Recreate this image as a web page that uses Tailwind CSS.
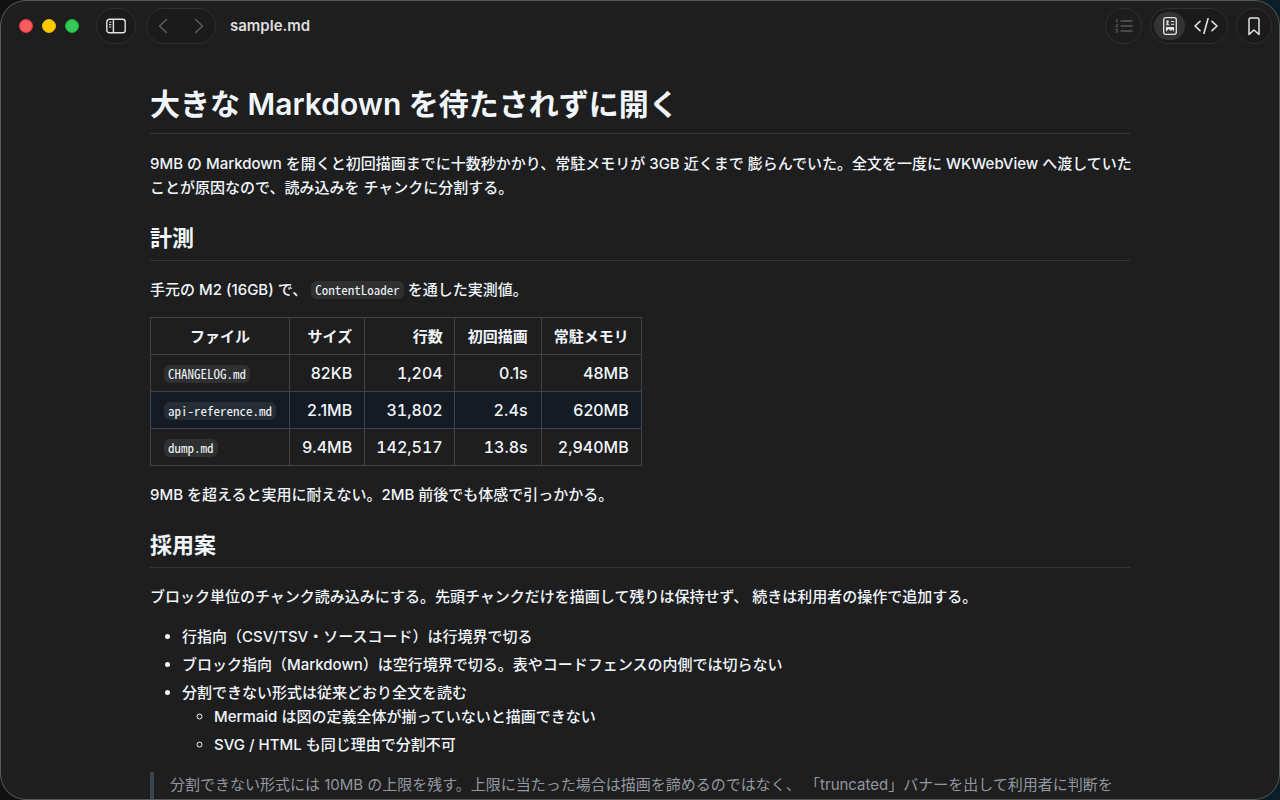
<!DOCTYPE html>
<html lang="ja">
<head>
<meta charset="utf-8">
<title>sample.md</title>
<script src="https://cdn.jsdelivr.net/npm/@tailwindcss/browser@4"></script>
</head>
<body class="h-screen overflow-hidden bg-linear-to-r from-[#111111] to-[#0d1e27] font-['Inter','Noto_Sans_CJK_JP',sans-serif] text-[15px] leading-6 font-medium text-[#f0f6fc]">
<div class="flex h-full flex-col overflow-hidden rounded-[26px] border border-[#58595a] bg-[#1e1e1e]">
  <header class="flex h-[50px] shrink-0 items-center pr-[7px] pl-[18px]">
    <div class="flex gap-[9px]">
      <button aria-label="閉じる" class="size-[14px] rounded-full border border-[#e8333d] bg-[#ff5a5f]"></button>
      <button aria-label="しまう" class="size-[14px] rounded-full border border-[#eab800] bg-[#ffc900]"></button>
      <button aria-label="拡大" class="size-[14px] rounded-full border border-[#17b43c] bg-[#34c759]"></button>
    </div>
    <button aria-label="サイドバー" class="ml-[17px] flex h-9 w-10 items-center justify-center rounded-full border border-[#303030] bg-[#1b1b1b] text-[#e4e4e4]">
      <svg class="h-4 w-5" viewBox="0 0 20 16" fill="none" stroke="currentColor" stroke-width="1.4"><rect x=".8" y="1.2" width="18.4" height="13.6" rx="2.6"/><path d="M7.4 1.2v13.6"/><path d="M3 4.2h2.4M3 6.6h2.4M3 9h2.4" stroke-width="1"/></svg>
    </button>
    <div class="ml-[10px] flex h-9 w-[70px] items-center justify-between rounded-full border border-[#303030] bg-[#1b1b1b] px-[11px] text-[#5c5c5c]">
      <button aria-label="戻る"><svg class="h-4 w-[10px]" viewBox="0 0 10 16" fill="none" stroke="currentColor" stroke-width="1.5" stroke-linecap="round" stroke-linejoin="round"><path d="M8.5 1.5 1.5 8l7 6.5"/></svg></button>
      <button aria-label="進む"><svg class="h-4 w-[10px]" viewBox="0 0 10 16" fill="none" stroke="currentColor" stroke-width="1.5" stroke-linecap="round" stroke-linejoin="round"><path d="m1.5 1.5 7 6.5-7 6.5"/></svg></button>
    </div>
    <div class="ml-[14px] text-[15px] font-semibold text-[#dedede]">sample.md</div>
    <button aria-label="目次" class="ml-auto flex h-9 w-[37px] items-center justify-center rounded-full border border-[#303030] bg-[#1d1d1d] text-[#5a5a5a]">
      <svg class="h-4 w-[18px]" viewBox="0 0 18 16" fill="none" stroke="currentColor" stroke-linecap="round" stroke-linejoin="round"><path d="M6 3h11M6 8h11M6 13h11" stroke-width="1.4"/><path d="M1 2l1-.7v3.2M.8 6.9q1.3-1.2 1.8-.2 0 .8-1.8 2.3h2M.8 11.5h1.9l-1 1.2q1.3 0 1 1.2-.5 1-1.9.3" stroke-width="1"/></svg>
    </button>
    <div class="ml-2 flex h-9 w-[78px] items-center rounded-full border border-[#303030] bg-[#1b1b1b] pl-[3px] text-[#e4e4e4]">
      <button aria-label="プレビュー" class="flex h-7 w-[31px] items-center justify-center rounded-full bg-[#333333]">
        <svg class="h-[18px] w-[14px]" viewBox="0 0 14 18" fill="none" stroke="currentColor"><rect x=".7" y=".7" width="12.6" height="16.6" rx="2" stroke-width="1.3"/><path d="M3 4.3h3M3.2 6h2.4M3 7.8h3.4M4.6 3.4v4.4M8 4.5h3.2M8 7.3h3.2" stroke-width="1"/><path d="M3 10h8v4.8l-1.7-2.3-1.5 1.5-2-2L3 14.8z" fill="currentColor" stroke="none"/></svg>
      </button>
      <button aria-label="ソース" class="ml-2 flex h-7 w-[26px] items-center justify-center">
        <svg class="h-[18px] w-6" viewBox="0 0 24 18" fill="none" stroke="currentColor" stroke-width="1.6" stroke-linecap="round" stroke-linejoin="round"><path d="M6 4.3 1 9l5 4.7M18 4.3 23 9l-5 4.7M14 1.7l-4 14.6"/></svg>
      </button>
    </div>
    <button aria-label="ブックマーク" class="ml-2 flex size-9 items-center justify-center rounded-full border border-[#303030] bg-[#1b1b1b] text-[#e4e4e4]">
      <svg class="h-[19px] w-3" viewBox="0 0 12 19" fill="none" stroke="currentColor" stroke-width="1.5" stroke-linejoin="round"><path d="M1 2.5Q1 1 2.5 1h7Q11 1 11 2.5v15L6 13l-5 4.5z"/></svg>
    </button>
  </header>
  <main class="min-h-0 flex-1 overflow-hidden px-10 pt-[33px]">
    <article class="mx-auto max-w-[980px] [&_code]:inline-block [&_code]:rounded-md [&_code]:bg-[#9198a1]/15 [&_code]:px-1 [&_code]:font-['Noto_Sans_Mono_CJK_JP','Liberation_Mono',monospace] [&_code]:text-[13px] [&_code]:leading-[18px]">
      <h1 class="mb-[18px] border-b border-[#33373c] pb-[9px] text-[30px] leading-10 font-semibold">大きな Markdown を待たされずに開く</h1>
      <p class="-mr-2">9MB の Markdown を開くと初回描画までに十数秒かかり、常駐メモリが 3GB 近くまで 膨らんでいた。全文を一度に WKWebView へ渡していたことが原因なので、読み込みを チャンクに分割する。</p>
      <h2 class="mt-[23px] mb-[17px] border-b border-[#33373c] pb-[7px] text-[22px] leading-[30px] font-semibold">計測</h2>
      <p>手元の M2 (16GB) で、 <code>ContentLoader</code> を通した実測値。</p>
      <table class="mt-[15px] border-collapse text-right text-base leading-6 [&_td]:border [&_td]:border-[#3d444d] [&_td]:px-[13px] [&_td]:py-[6px] [&_th]:border [&_th]:border-[#3d444d] [&_th]:px-[13px] [&_th]:pt-[7px] [&_th]:pb-[5px] [&_th]:text-[15px] [&_th]:leading-6 [&_th]:font-semibold [&_:nth-child(2)]:px-3 [&_:nth-child(3)]:px-[11px] [&_:nth-child(3)]:tabular-nums [&_:nth-child(5)]:px-3">
        <thead><tr><th class="text-center">ファイル</th><th>サイズ</th><th>行数</th><th>初回描画</th><th>常駐メモリ</th></tr></thead>
        <tbody>
          <tr><td class="text-left"><code>CHANGELOG.md</code></td><td>82KB</td><td>1,204</td><td>0.1s</td><td>48MB</td></tr>
          <tr class="bg-[#151b23]"><td class="text-left"><code>api-reference.md</code></td><td>2.1MB</td><td>31,802</td><td>2.4s</td><td>620MB</td></tr>
          <tr><td class="text-left"><code>dump.md</code></td><td>9.4MB</td><td>142,517</td><td>13.8s</td><td>2,940MB</td></tr>
        </tbody>
      </table>
      <p class="mt-[17px]">9MB を超えると実用に耐えない。2MB 前後でも体感で引っかかる。</p>
      <h2 class="mt-[23px] mb-[17px] border-b border-[#33373c] pb-[7px] text-[22px] leading-[30px] font-semibold">採用案</h2>
      <p>ブロック単位のチャンク読み込みにする。先頭チャンクだけを描画して残りは保持せず、 続きは利用者の操作で追加する。</p>
      <ul class="mt-4 list-disc space-y-1 pl-8">
        <li>行指向（CSV/TSV・ソースコード）は行境界で切る</li>
        <li>ブロック指向（Markdown）は空行境界で切る。表やコードフェンスの内側では切らない</li>
        <li>分割できない形式は従来どおり全文を読む
          <ul class="list-[circle] space-y-1 pl-8">
            <li>Mermaid は図の定義全体が揃っていないと描画できない</li>
            <li>SVG / HTML も同じ理由で分割不可</li>
          </ul>
        </li>
      </ul>
      <blockquote class="mt-[15px] border-l-4 border-[#3d444d] px-4 pt-px pb-6 font-normal text-[#9198a1]">分割できない形式には 10MB の上限を残す。上限に当たった場合は描画を諦めるのではなく、 「truncated」バナーを出して利用者に判断を</blockquote>
    </article>
  </main>
</div>
</body>
</html>
